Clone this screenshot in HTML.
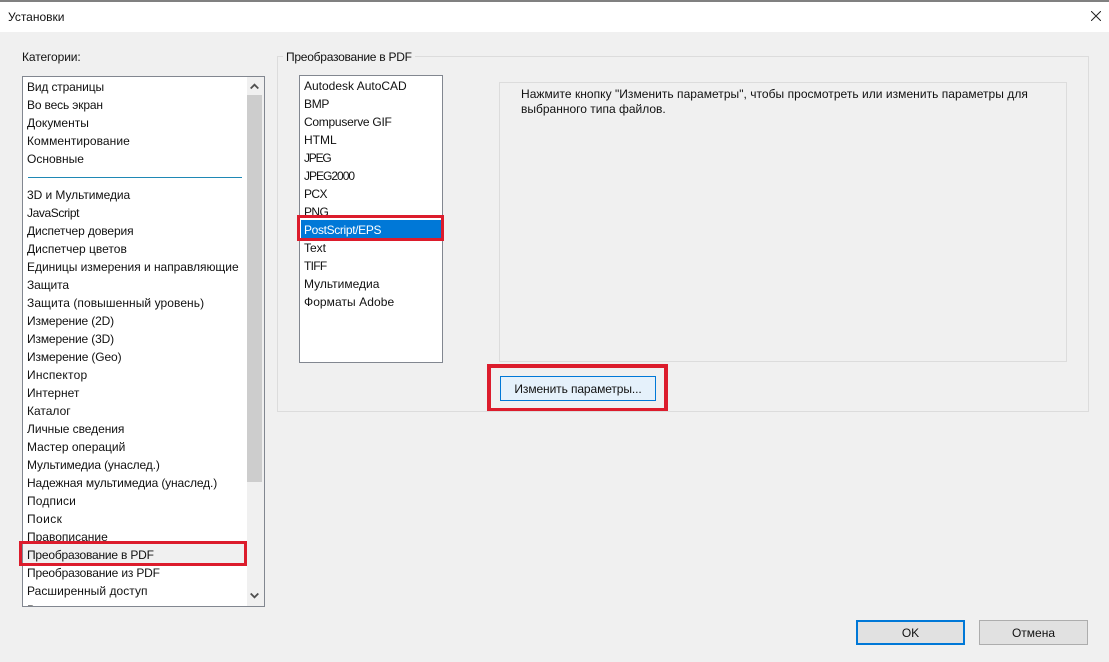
<!DOCTYPE html>
<html><head><meta charset="utf-8">
<style>
html,body{margin:0;padding:0;width:1109px;height:662px;overflow:hidden;background:#f0f0f0}
body{position:relative;font-family:"Liberation Sans",sans-serif;font-size:12px;color:#111}
div{position:absolute;box-sizing:border-box}
.t{white-space:nowrap;line-height:18px;height:18px}
.red{border:3px solid #dc1c2c}
</style></head><body>
<div style="left:0;top:0;width:1109px;height:32px;background:#fff;border-top:2px solid #808080"></div>
<div class="t" style="left:8px;top:8px">Установки</div>
<svg style="position:absolute;left:1091px;top:11px" width="10" height="10" viewBox="0 0 10 10"><path d="M0 0L10 10M10 0L0 10" stroke="#222" stroke-width="1" fill="none"/></svg>
<div class="t" style="left:22px;top:48px;letter-spacing:-.1px">Категории:</div>

<div style="left:22px;top:76px;width:243px;height:531px;background:#fff;border:1px solid #828790;overflow:hidden">
<div class="t" style="left:4px;top:1px;letter-spacing:-.15px">Вид страницы</div>
<div class="t" style="left:4px;top:19px;letter-spacing:-.15px">Во весь экран</div>
<div class="t" style="left:4px;top:37px">Документы</div>
<div class="t" style="left:4px;top:55px;letter-spacing:.06px">Комментирование</div>
<div class="t" style="left:4px;top:73px">Основные</div>
<div style="left:5px;top:100px;width:214px;height:1px;background:#1f88b5"></div>
<div class="t" style="left:4px;top:109px;letter-spacing:-.06px">3D и Мультимедиа</div>
<div class="t" style="left:4px;top:127px;letter-spacing:-.4px">JavaScript</div>
<div class="t" style="left:4px;top:145px;letter-spacing:-.12px">Диспетчер доверия</div>
<div class="t" style="left:4px;top:163px">Диспетчер цветов</div>
<div class="t" style="left:4px;top:181px;letter-spacing:-.03px">Единицы измерения и направляющие</div>
<div class="t" style="left:4px;top:199px;letter-spacing:-.1px">Защита</div>
<div class="t" style="left:4px;top:217px;letter-spacing:.07px">Защита (повышенный уровень)</div>
<div class="t" style="left:4px;top:235px;letter-spacing:-.15px">Измерение (2D)</div>
<div class="t" style="left:4px;top:253px;letter-spacing:-.15px">Измерение (3D)</div>
<div class="t" style="left:4px;top:271px;letter-spacing:-.13px">Измерение (Geo)</div>
<div class="t" style="left:4px;top:289px;letter-spacing:.2px">Инспектор</div>
<div class="t" style="left:4px;top:307px">Интернет</div>
<div class="t" style="left:4px;top:325px">Каталог</div>
<div class="t" style="left:4px;top:343px;letter-spacing:-.06px">Личные сведения</div>
<div class="t" style="left:4px;top:361px">Мастер операций</div>
<div class="t" style="left:4px;top:379px;letter-spacing:-.14px">Мультимедиа (унаслед.)</div>
<div class="t" style="left:4px;top:397px;letter-spacing:-.13px">Надежная мультимедиа (унаслед.)</div>
<div class="t" style="left:4px;top:415px;letter-spacing:.14px">Подписи</div>
<div class="t" style="left:4px;top:433px;letter-spacing:.4px">Поиск</div>
<div class="t" style="left:4px;top:451px">Правописание</div>
<div style="left:0;top:467px;width:223px;height:19px;background:#f0f0f0"></div>
<div class="t" style="left:4px;top:469px;letter-spacing:-.2px">Преобразование в PDF</div>
<div class="t" style="left:4px;top:487px;letter-spacing:-.18px">Преобразование из PDF</div>
<div class="t" style="left:4px;top:505px;letter-spacing:.05px">Расширенный доступ</div>
<div class="t" style="left:4px;top:524px">Рецензирование</div>
<div style="left:224px;top:0;width:17px;height:529px;background:#f0f0f0"></div>
<div style="left:224px;top:18px;width:15px;height:387px;background:#cdcdcd"></div>
<svg style="position:absolute;left:227px;top:6px" width="9" height="7" viewBox="0 0 9 7"><path d="M.7 5.5L4.5 1.7L8.3 5.5" stroke="#505050" stroke-width="1.8" fill="none"/></svg>
<svg style="position:absolute;left:227px;top:515px" width="9" height="7" viewBox="0 0 9 7"><path d="M.7 1.5L4.5 5.3L8.3 1.5" stroke="#505050" stroke-width="1.8" fill="none"/></svg>
</div>
<div class="red" style="left:19px;top:541px;width:228px;height:25px"></div>

<div style="left:277px;top:56px;width:812px;height:356px;border:1px solid #dcdcdc"></div>
<div class="t" style="left:283px;top:48px;padding:0 3px;background:#f0f0f0;letter-spacing:-.25px">Преобразование в PDF</div>

<div style="left:299px;top:75px;width:144px;height:288px;background:#fff;border:1px solid #828790">
<div class="t" style="left:4px;top:1px">Autodesk AutoCAD</div>
<div class="t" style="left:4px;top:19px;letter-spacing:-.3px">BMP</div>
<div class="t" style="left:4px;top:37px;letter-spacing:-.27px">Compuserve GIF</div>
<div class="t" style="left:4px;top:55px">HTML</div>
<div class="t" style="left:4px;top:73px;letter-spacing:-1.2px">JPEG</div>
<div class="t" style="left:4px;top:91px;letter-spacing:-1px">JPEG2000</div>
<div class="t" style="left:4px;top:109px;letter-spacing:-.6px">PCX</div>
<div class="t" style="left:4px;top:127px;letter-spacing:-.6px">PNG</div>
<div style="left:1px;top:144px;width:140px;height:19px;background:#0078d7"></div>
<div class="t" style="left:4px;top:145px;color:#fff;letter-spacing:-.35px">PostScript/EPS</div>
<div class="t" style="left:4px;top:163px">Text</div>
<div class="t" style="left:4px;top:181px;letter-spacing:-.7px">TIFF</div>
<div class="t" style="left:4px;top:199px">Мультимедиа</div>
<div class="t" style="left:4px;top:217px;letter-spacing:.07px">Форматы Adobe</div>
</div>
<div class="red" style="left:297px;top:215px;width:147px;height:26px"></div>

<div style="left:499px;top:82px;width:568px;height:280px;border:1px solid #dcdcdc"></div>
<div class="t" style="left:521px;top:85px;letter-spacing:.035px">Нажмите кнопку "Изменить параметры", чтобы просмотреть или изменить параметры для</div>
<div class="t" style="left:521px;top:100px">выбранного типа файлов.</div>

<div style="left:500px;top:376px;width:156px;height:25px;background:#e5f1fb;border:1px solid #0078d7;text-align:center;line-height:24px;letter-spacing:-.1px">Изменить параметры...</div>
<div style="left:487px;top:364px;width:181px;height:47px;border:solid #dc1c2c;border-width:4px 4px 3px 4px"></div>

<div style="left:856px;top:620px;width:109px;height:25px;background:#e1e1e1;border:2px solid #0078d7;text-align:center;line-height:22px">OK</div>
<div style="left:979px;top:620px;width:109px;height:25px;background:#e1e1e1;border:1px solid #adadad;text-align:center;line-height:24px">Отмена</div>
</body></html>
